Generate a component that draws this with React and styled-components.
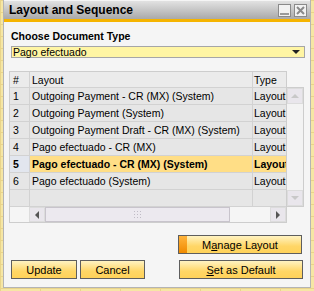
import React from "react";
import styled, { createGlobalStyle } from "styled-components";

const Global = createGlobalStyle`
  html, body {
    margin: 0;
    padding: 0;
  }
  body {
    background-color: #f6e6a4;
    background-image:
      linear-gradient(#e9d48a 1px, transparent 1px),
      linear-gradient(90deg, #e9d48a 1px, transparent 1px);
    background-size: 40px 12px;
    font-family: "Liberation Sans", Arial, sans-serif;
    font-size: 11px;
    color: #000;
  }
  #root {
    padding: 0 3px;
  }
`;

const Window = styled.div`
  width: 308px;
  height: 288px;
  box-sizing: border-box;
  border: 1px solid #b4b4b4;
  border-top: none;
  background: #f5f5f5;
  display: flex;
  flex-direction: column;
`;

const TitleBar = styled.div`
  height: 21px;
  margin-top: 1px;
  box-sizing: border-box;
  padding: 0 3px 0 5px;
  display: flex;
  align-items: center;
  justify-content: space-between;
  background: linear-gradient(#e2e2e2, #a9a9a9);
  border-bottom: 3px solid #f5b400;
`;

const Title = styled.div`
  font-weight: bold;
  font-size: 12px;
`;

const TitleButtons = styled.div`
  display: flex;
  gap: 3px;
`;

const TitleButton = styled.div`
  width: 11px;
  height: 11px;
  border: 1px solid #8a8a8a;
  background: #f2f2f2;
  display: flex;
  align-items: center;
  justify-content: center;
`;

const Body = styled.div`
  flex: 1;
  padding: 7px 7px 0 7px;
  display: flex;
  flex-direction: column;
`;

const Label = styled.div`
  font-weight: bold;
  font-size: 10.5px;
  height: 14px;
  line-height: 14px;
`;

const Combo = styled.div`
  margin-top: 3px;
  width: 287px;
  height: 10px;
  border: 1px solid #a6a6a6;
  background: #fff5a3;
  display: flex;
  align-items: center;
  justify-content: space-between;
  padding: 0 4px 0 1px;
  line-height: 10px;
  font-size: 10.5px;
`;

const Frame = styled.div`
  margin-top: 13px;
  margin-left: -2px;
  display: flex;
  align-items: flex-start;
`;

const GridBox = styled.div`
  width: 278px;
  box-sizing: border-box;
  border: 1px solid #cdcdcd;
  background: #f5f5f5;
`;

const Row = styled.div`
  display: grid;
  grid-template-columns: 20px 223px 33px;
  height: ${(p) => (p.$head ? 16 : 17)}px;
  box-sizing: border-box;
  border-bottom: 1px solid #d2d2d2;
  background: ${(p) => (p.$selected ? "#ffde86" : p.$head ? "#ebebeb" : "#e6e6e6")};
  font-weight: ${(p) => (p.$selected ? "bold" : "normal")};
`;

const Cell = styled.div`
  box-sizing: border-box;
  border-right: ${(p) => (p.$last ? "none" : "1px solid #d2d2d2")};
  padding-left: ${(p) => (p.$num ? 3 : p.$last ? 1 : 2)}px;
  line-height: 16px;
  font-size: 10.5px;
  white-space: nowrap;
  overflow: hidden;
  background: ${(p) => (p.$mark ? "#e2e6ee" : "transparent")};
`;

const HScroll = styled.div`
  display: flex;
  height: 15px;
  margin-left: 19px;
`;

const Arrow = styled.div`
  width: 16px;
  height: ${(p) => p.$h || 15}px;
  box-sizing: border-box;
  background: #e9e6ec;
  border: 1px solid #dcdcdc;
  display: flex;
  align-items: center;
  justify-content: center;
`;

const Thumb = styled.div`
  width: 185px;
  box-sizing: border-box;
  background: #ece9ef;
  border: 1px solid #c8c4cc;
  display: flex;
  align-items: center;
  justify-content: center;
`;

const Track = styled.div`
  flex: 1;
  background: #f5f5f5;
`;

const VScroll = styled.div`
  margin-top: 16px;
  width: 17px;
  height: 120px;
  box-sizing: border-box;
  border: 1px solid #cdcdcd;
  border-left: none;
  background: #f3f3f3;
  display: flex;
  flex-direction: column;
  justify-content: space-between;
`;

const ButtonRow = styled.div`
  display: flex;
  gap: 3px;
  margin-top: ${(p) => p.$gap}px;
  justify-content: ${(p) => (p.$end ? "flex-end" : "flex-start")};
  padding-right: ${(p) => (p.$end ? 1 : 0)}px;
`;

const Spacer = styled.div`
  flex: 1;
`;

const Button = styled.div`
  width: ${(p) => p.$w}px;
  height: 19px;
  box-sizing: border-box;
  border: 1px solid #5e5e5e;
  background: linear-gradient(#fff3c2, #ffd666 60%, #ffd25a);
  display: flex;
  align-items: center;
  justify-content: center;
  position: relative;
  u {
    text-decoration: underline;
  }
`;

const Stripe = styled.div`
  position: absolute;
  left: 0;
  top: 0;
  bottom: 0;
  width: 8px;
  background: linear-gradient(#ffb43c, #f08a00);
`;

const rows = [
  ["1", "Outgoing Payment - CR (MX) (System)", "Layout"],
  ["2", "Outgoing Payment (System)", "Layout"],
  ["3", "Outgoing Payment Draft - CR (MX) (System)", "Layout"],
  ["4", "Pago efectuado - CR (MX)", "Layout"],
  ["5", "Pago efectuado - CR (MX) (System)", "Layout"],
  ["6", "Pago efectuado (System)", "Layout"],
];

const Tri = ({ dir, color }) => {
  const pts = {
    up: "0,5 4,1 8,5",
    down: "0,1 8,1 4,5",
    left: "5,0 5,8 1,4",
    right: "1,0 1,8 5,4",
  }[dir];
  const w = dir === "up" || dir === "down" ? 8 : 6;
  const h = dir === "up" || dir === "down" ? 6 : 8;
  return (
    <svg width={w} height={h} viewBox={`0 0 ${w} ${h}`}>
      <polygon points={pts} fill={color} />
    </svg>
  );
};

const Grip = () => (
  <svg width="8" height="7" viewBox="0 0 8 7">
    {[0, 3, 6].map((x) =>
      [0, 3, 6].map((y) => <rect key={x + "-" + y} x={x} y={y} width="1" height="1" fill="#c0bcc6" />)
    )}
  </svg>
);

export default function App() {
  return (
    <>
      <Global />
      <Window>
        <TitleBar>
          <Title>Layout and Sequence</Title>
          <TitleButtons>
            <TitleButton>
              <svg width="9" height="9" viewBox="0 0 9 9">
                <rect x="0" y="7" width="9" height="2" fill="#9a9a9a" />
              </svg>
            </TitleButton>
            <TitleButton>
              <svg width="9" height="9" viewBox="0 0 9 9">
                <path d="M1 1 L8 8 M8 1 L1 8" stroke="#8a8a8a" strokeWidth="2" />
              </svg>
            </TitleButton>
          </TitleButtons>
        </TitleBar>
        <Body>
          <Label>Choose Document Type</Label>
          <Combo>
            <span>Pago efectuado</span>
            <Tri dir="down" color="#222" />
          </Combo>
          <Frame>
            <GridBox>
              <Row $head>
                <Cell $num>#</Cell>
                <Cell>Layout</Cell>
                <Cell $last>Type</Cell>
              </Row>
              {rows.map(([n, name, type]) => (
                <Row key={n} $selected={n === "5"}>
                  <Cell $num $mark={n === "5"}>{n}</Cell>
                  <Cell>{name}</Cell>
                  <Cell $last>{type}</Cell>
                </Row>
              ))}
              <Row>
                <Cell $num />
                <Cell />
                <Cell $last />
              </Row>
              <HScroll>
                <Arrow>
                  <Tri dir="left" color="#555" />
                </Arrow>
                <Thumb>
                  <Grip />
                </Thumb>
                <Track />
                <Arrow>
                  <Tri dir="right" color="#555" />
                </Arrow>
              </HScroll>
            </GridBox>
            <VScroll>
              <Arrow $h={16}>
                <Tri dir="up" color="#c8c8c8" />
              </Arrow>
              <Arrow $h={16}>
                <Tri dir="down" color="#c8c8c8" />
              </Arrow>
            </VScroll>
          </Frame>
          <ButtonRow $gap={12} $end>
            <Button $w={124}>
              <Stripe />
              <span>
                M<u>a</u>nage Layout
              </span>
            </Button>
          </ButtonRow>
          <ButtonRow $gap={6}>
            <Button $w={66}>
              <span>Update</span>
            </Button>
            <Button $w={65}>
              <span>Cancel</span>
            </Button>
            <Spacer />
            <Button $w={124}>
              <span>
                <u>S</u>et as Default
              </span>
            </Button>
          </ButtonRow>
        </Body>
      </Window>
    </>
  );
}
